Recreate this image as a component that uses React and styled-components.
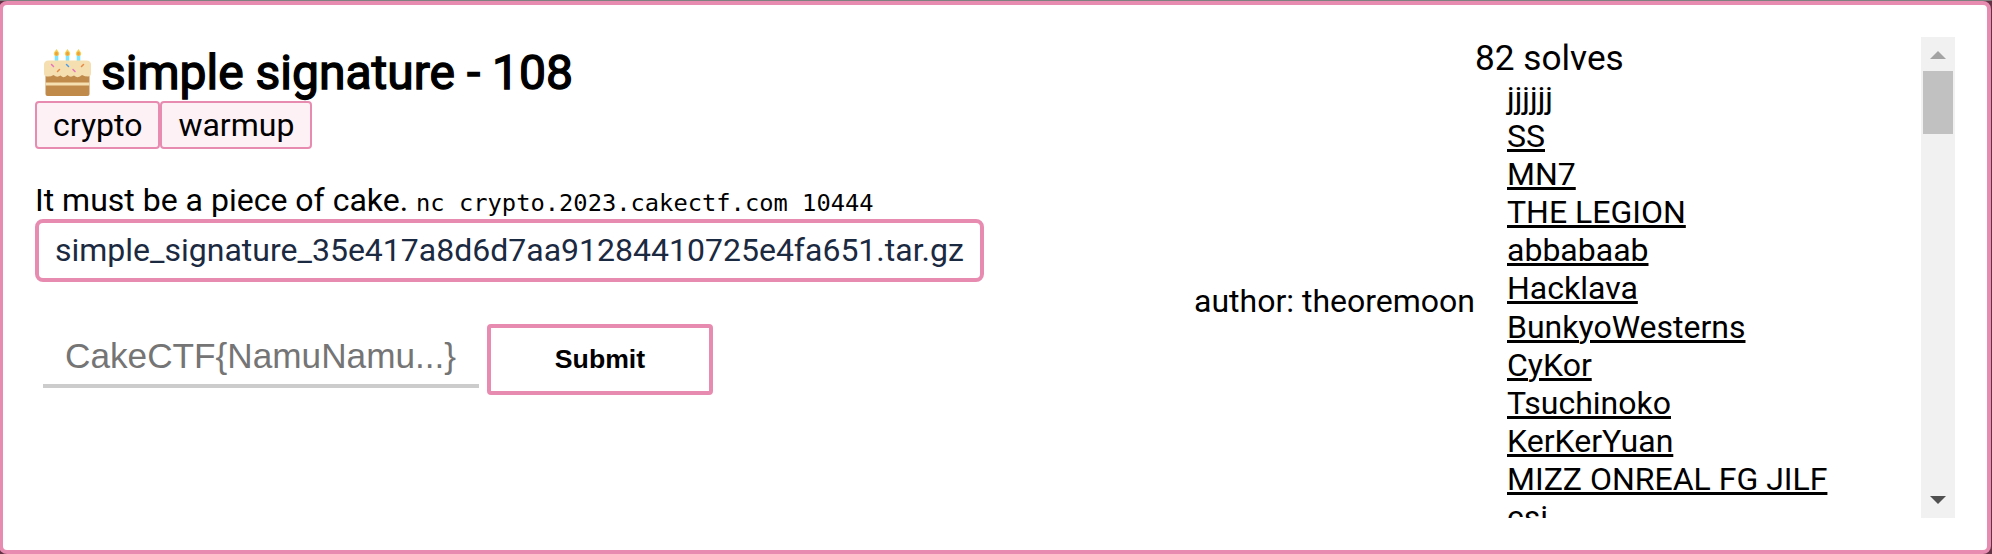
import React from "react";
import styled, { createGlobalStyle } from "styled-components";

const pink = "#e88bb0";

const GlobalStyle = createGlobalStyle`
  *, *::before, *::after { box-sizing: border-box; }
  html, body { margin: 0; padding: 0; overflow: hidden; }
  body {
    background: #653346;
    color: #000;
    font-family: Roboto, sans-serif;
    font-size: 32px;
    line-height: 38px;
  }
`;

const Page = styled.div`
  height: 554px;
  border-top: 1px solid #808080;
  padding-right: 1px;
  overflow: hidden;
`;

const Card = styled.article`
  display: flex;
  height: 553px;
  margin-left: -1px;
  padding: 32px;
  border: 4px solid ${pink};
  border-radius: 8px;
  background: #fff;
`;

const Details = styled.div`
  flex: 1;
  min-width: 0;
  padding-top: 6px;
`;

const Title = styled.h2`
  display: flex;
  align-items: center;
  height: 58px;
  margin: 0;
  padding-left: 8px;
  gap: 9px;
  font-size: 48px;
  font-weight: 400;
  -webkit-text-stroke: 1.4px #000;
  line-height: 58px;
  white-space: nowrap;
`;

const TitleText = styled.span`
  padding-top: 2px;
`;

const CakeSvg = styled.svg`
  width: 49px;
  height: 49px;
  flex: none;
`;

const Tags = styled.div`
  display: flex;
`;

const Tag = styled.span`
  height: 48px;
  padding: 3px 16px;
  border: 2px solid ${pink};
  border-radius: 4px;
  background: #fdf1f6;
`;

const Description = styled.p`
  margin: 32px 0 0;
  height: 38px;
  white-space: nowrap;
`;

const Code = styled.code`
  font: 23.75px/38px "DejaVu Sans Mono", monospace;
`;

const FileLink = styled.a`
  display: inline-flex;
  align-items: center;
  height: 63px;
  padding: 0 16px 2px;
  border: 4px solid ${pink};
  border-radius: 8px;
  color: #1b2a41;
  text-decoration: none;
`;

const FlagForm = styled.form`
  display: flex;
  align-items: flex-start;
  gap: 8px;
  margin: 42px 0 0 8px;
`;

const FlagInput = styled.input`
  width: 436px;
  height: 64px;
  padding: 4px 22px 0;
  border: 0;
  border-bottom: 4px solid #ccc;
  background: transparent;
  font: 35.2px "Liberation Sans", Arial, sans-serif;
  &::placeholder { color: #757575; opacity: 1; }
`;

const SubmitButton = styled.button`
  width: 226px;
  height: 71px;
  padding: 0;
  border: 4px solid ${pink};
  border-radius: 4px;
  background: #fff;
  color: #000;
  font: bold 26.67px "Liberation Sans", Arial, sans-serif;
`;

const Author = styled.div`
  align-self: center;
  padding-top: 46px;
  white-space: nowrap;
`;

const Solves = styled.section`
  display: flex;
  width: 480px;
  height: 481px;
  overflow: hidden;
`;

const SolveContent = styled.div`
  flex: 1;
  min-width: 0;
`;

const SolveCount = styled.div`
  height: 42px;
  font-size: 35.2px;
  line-height: 42px;
`;

const TeamList = styled.ul`
  margin: 0;
  padding: 0 0 0 32px;
  list-style: none;
`;

const Team = styled.li`
  height: 38.1px;
  line-height: 38.1px;
  white-space: nowrap;
`;

const TeamLink = styled.a`
  color: #000;
  text-decoration: underline;
  text-decoration-thickness: 3px;
`;

const ScrollTrack = styled.div`
  display: flex;
  flex-direction: column;
  align-items: center;
  width: 34px;
  background: #f1f1f1;
`;

const ScrollArrow = styled.svg`
  display: block;
  width: 34px;
  height: 34px;
  flex: none;
`;

const ScrollThumb = styled.div`
  width: 30px;
  height: 63px;
  margin-bottom: auto;
  background: #c1c1c1;
`;

const teams = ["jjjjjj", "SS", "MN7", "THE LEGION", "abbabaab", "Hacklava", "BunkyoWesterns", "CyKor", "Tsuchinoko", "KerKerYuan", "MIZZ ONREAL FG JILF", "csi"];

function Cake() {
  return (
    <CakeSvg viewBox="0 0 49 49" aria-label="cake">
      {[13.5, 24.5, 35.5].map((x) => (
        <g key={x}>
          <rect x={x - 1.8} y="7" width="3.6" height="7" fill="#80e5fb" />
          <path d={`M${x} 1C${x + 1} 3 ${x + 2.7} 4 ${x + 2.7} 5.8C${x + 2.7} 8.7 ${x - 2.7} 8.7 ${x - 2.7} 5.8C${x - 2.7} 4 ${x - 1} 3 ${x} 1Z`} fill="#f5cf52" />
          <ellipse cx={x} cy="5.7" rx="1.5" ry="2" fill="#eba23d" />
        </g>
      ))}
      <path d="M2.5 24H46.5V46Q46.5 48 44.5 48H4.5Q2.5 48 2.5 46Z" fill="#c08a4b" />
      <rect x="2.5" y="34.5" width="44" height="3" fill="#f5deb0" />
      <path d="M1 17Q1 12.500 5.500 12.500H43.500Q48 12.500 48 17V25Q48 28.500 45 28.500Q42 28.500 39 27Q35 31 31 27.500Q27.500 30 24.500 27Q21 31 17.500 27.500Q14 30 10.500 27Q7.500 29 4 28.500Q1 28.500 1 25Z" fill="#f5deb0" />
      <g strokeWidth="1.5" strokeLinecap="round">
        <path d="M8.500 16.500L10.500 18.500M30 21.500L32 23.500" stroke="#e673bd" />
        <path d="M23.500 16.500L25.500 18.500" stroke="#4c9be8" />
        <path d="M38.500 18.500L40.500 16.500M14.500 23.500L16.500 21.500" stroke="#e58b45" />
      </g>
    </CakeSvg>
  );
}

export default function App() {
  return (
    <>
      <GlobalStyle />
      <Page>
        <Card>
          <Details>
            <Title><Cake /><TitleText>simple signature - 108</TitleText></Title>
            <Tags><Tag>crypto</Tag><Tag>warmup</Tag></Tags>
            <Description>It must be a piece of cake. <Code>nc crypto.2023.cakectf.com 10444</Code></Description>
            <FileLink>simple_signature_35e417a8d6d7aa91284410725e4fa651.tar.gz</FileLink>
            <FlagForm>
              <FlagInput placeholder="CakeCTF{NamuNamu...}" />
              <SubmitButton type="button">Submit</SubmitButton>
            </FlagForm>
          </Details>
          <Author>author: theoremoon</Author>
          <Solves>
            <SolveContent>
              <SolveCount>82 solves</SolveCount>
              <TeamList>
                {teams.map((team) => <Team key={team}><TeamLink>{team}</TeamLink></Team>)}
              </TeamList>
            </SolveContent>
            <ScrollTrack>
              <ScrollArrow viewBox="0 0 34 34"><path d="M9 22L17 14L25 22Z" fill="#a3a3a3" /></ScrollArrow>
              <ScrollThumb />
              <ScrollArrow viewBox="0 0 34 34"><path d="M9 12H25L17 20Z" fill="#505050" /></ScrollArrow>
            </ScrollTrack>
          </Solves>
        </Card>
      </Page>
    </>
  );
}
